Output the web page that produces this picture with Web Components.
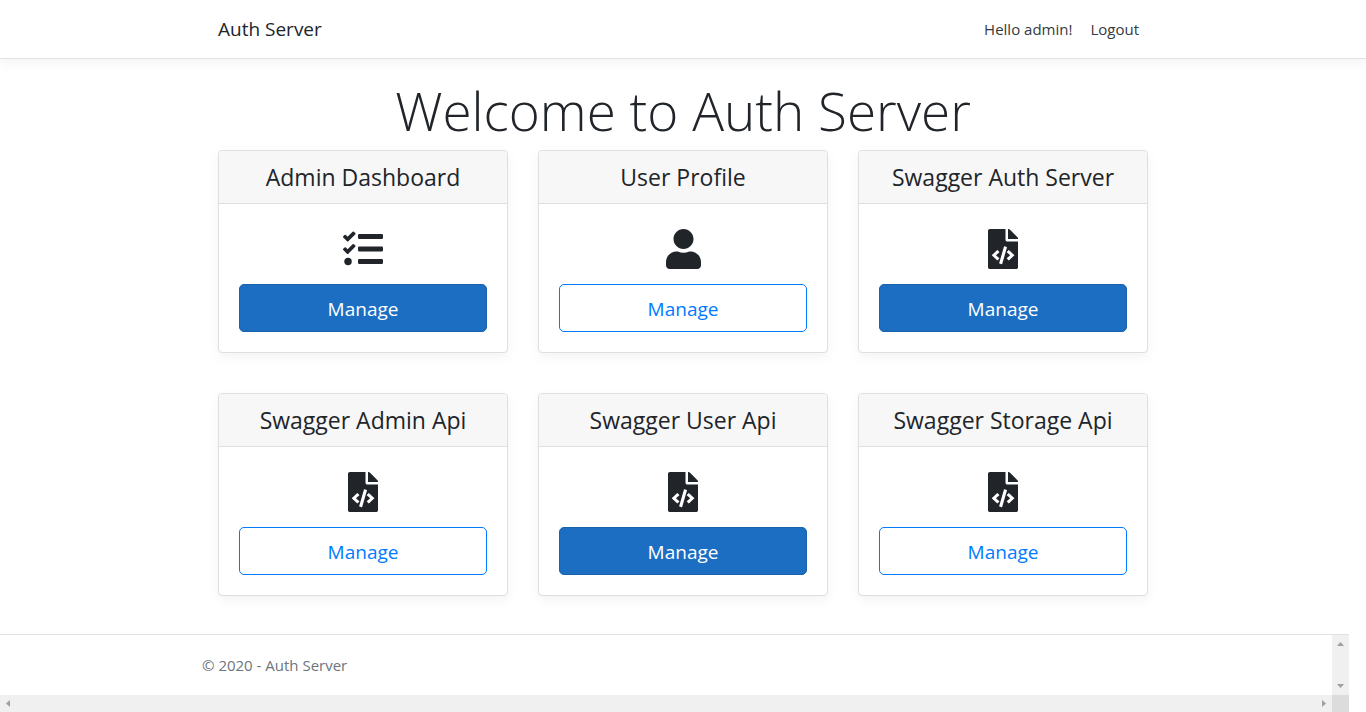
<!DOCTYPE html>
<html lang="en">
<head>
<meta charset="utf-8">
<meta name="viewport" content="width=device-width, initial-scale=1">
<title>Auth Server</title>
<style>
  body { margin: 0; background: #fff; color: #212529; font: 15px/24px "Open Sans", "Noto Sans", sans-serif; }
</style>
</head>
<body>
<auth-page></auth-page>

<template id="page-template">
  <style>
    :host { display: flex; flex-direction: column; min-height: 100vh; }
    main { box-sizing: border-box; width: 100%; max-width: 960px; margin: 0 auto; padding: 18px 15px 38px; flex: 1; }
    h1 { margin: 0 0 6px; font-size: 53px; font-weight: 300; line-height: 67px; text-align: center; }
    .deck { display: grid; grid-template-columns: repeat(auto-fit, minmax(240px, 1fr)); gap: 40px 30px; }
  </style>
  <auth-header>
    <span slot="user">Hello admin!</span>
  </auth-header>
  <main>
    <h1>Welcome to Auth Server</h1>
    <div class="deck">
      <service-card icon="tasks" primary>Admin Dashboard</service-card>
      <service-card icon="user">User Profile</service-card>
      <service-card icon="code" primary>Swagger Auth Server</service-card>
      <service-card icon="code">Swagger Admin Api</service-card>
      <service-card icon="code" primary>Swagger User Api</service-card>
      <service-card icon="code">Swagger Storage Api</service-card>
    </div>
  </main>
  <footer-frame>© 2020 - Auth Server</footer-frame>
</template>

<template id="header-template">
  <style>
    :host { display: block; border-bottom: 1px solid #dee2e6; background: #fff; box-shadow: 0 4px 12px rgba(0, 0, 0, .05); }
    nav { box-sizing: border-box; display: flex; align-items: center; max-width: 960px; height: 58px; margin: 0 auto; padding: 0 24px 0 15px; }
    a { color: #212529; text-decoration: none; }
    .brand { margin-right: auto; font-size: 19px; line-height: 30px; }
    .user { color: #343a40; margin-right: 18px; }
    button { padding: 0; border: 0; background: none; color: #343a40; font: inherit; cursor: pointer; }
  </style>
  <nav>
    <a class="brand" href="#">Auth Server</a>
    <span class="user"><slot name="user"></slot></span>
    <button type="button">Logout</button>
  </nav>
</template>

<template id="card-template">
  <style>
    :host { display: block; border: 1px solid #dfdfdf; border-radius: 4px; background: #fff; box-shadow: 0 4px 12px rgba(0, 0, 0, .05); text-align: center; }
    h2 { margin: 0; padding: 12px 8px; border-bottom: 1px solid #dfdfdf; border-radius: 3px 3px 0 0; background: #f7f7f7; font-size: 23px; font-weight: 400; line-height: 28px; white-space: nowrap; }
    .body { padding: 25px 20px 20px; }
    svg { display: block; height: 40px; margin: 0 auto 15px; fill: #212529; }
    button { display: block; box-sizing: border-box; width: 100%; height: 48px; padding: 2px 0 0; border: 1px solid #007bff; border-radius: 5px; background: #fff; color: #007bff; font: inherit; font-size: 19px; line-height: 30px; cursor: pointer; }
    :host([primary]) button { border-color: #1861ac; background: #1b6ec2; color: #fff; font-weight: 500; }
  </style>
  <h2><slot></slot></h2>
  <div class="body">
    <svg aria-hidden="true"><path/></svg>
    <button type="button">Manage</button>
  </div>
</template>

<template id="footer-template">
  <style>
    :host { display: grid; grid-template-columns: 1fr 17px; grid-template-rows: 60px 17px; margin-right: 17px; border-top: 1px solid #dee2e6; }
    footer { color: #6c757d; }
    .inner { box-sizing: border-box; max-width: 960px; margin: 0 auto; padding: 0 16px; line-height: 60px; }
    .bar { display: flex; justify-content: space-between; align-items: center; background: #f0f0f0; }
    .down { flex-direction: column; padding: 7px 0; }
    .across { padding: 0 6px; }
    .corner { background: #dcdcdc; }
    svg { display: block; fill: #a0a0a0; }
  </style>
  <footer><div class="inner"><slot></slot></div></footer>
  <div class="bar down" aria-hidden="true">
    <svg width="7" height="4"><path d="M0 4 3.5 0 7 4z"/></svg>
    <svg width="7" height="4"><path d="M0 0 3.5 4 7 0z"/></svg>
  </div>
  <div class="bar across" aria-hidden="true">
    <svg width="4" height="7"><path d="M4 0 0 3.5 4 7z"/></svg>
    <svg width="4" height="7"><path d="M0 0 4 3.5 0 7z"/></svg>
  </div>
  <div class="corner"></div>
</template>

<script>
  const ICONS = {
    tasks: [512, 'M139.61 35.5a12 12 0 0 0-17 0L58.93 98.81l-22.7-22.12a12 12 0 0 0-17 0L3.53 92.41a12 12 0 0 0 0 17l47.59 47.4a12.78 12.78 0 0 0 17.61 0l15.59-15.62L156.52 69a12.09 12.09 0 0 0 .09-17zm0 159.19a12 12 0 0 0-17 0l-63.68 63.72-22.7-22.1a12 12 0 0 0-17 0L3.53 252a12 12 0 0 0 0 17L51 316.5a12.77 12.77 0 0 0 17.6 0l15.7-15.69 72.2-72.22a12 12 0 0 0 .09-16.9zM64 368c-26.49 0-48.59 21.5-48.59 48S37.53 464 64 464a48 48 0 0 0 0-96zm432 16H208a16 16 0 0 0-16 16v32a16 16 0 0 0 16 16h288a16 16 0 0 0 16-16v-32a16 16 0 0 0-16-16zm0-320H208a16 16 0 0 0-16 16v32a16 16 0 0 0 16 16h288a16 16 0 0 0 16-16V80a16 16 0 0 0-16-16zm0 160H208a16 16 0 0 0-16 16v32a16 16 0 0 0 16 16h288a16 16 0 0 0 16-16v-32a16 16 0 0 0-16-16z'],
    user: [448, 'M224 256c70.7 0 128-57.3 128-128S294.7 0 224 0 96 57.3 96 128s57.3 128 128 128zm89.6 32h-16.7c-22.2 10.2-46.9 16-72.9 16s-50.6-5.8-72.9-16h-16.7C60.2 288 0 348.2 0 422.4V464c0 26.5 21.5 48 48 48h352c26.5 0 48-21.5 48-48v-41.6c0-74.2-60.2-134.4-134.4-134.4z'],
    code: [384, 'M384 121.941V128H256V0h6.059c6.365 0 12.47 2.529 16.971 7.029l97.941 97.941A24.005 24.005 0 0 1 384 121.941zM248 160c-13.2 0-24-10.8-24-24V0H24C10.745 0 0 10.745 0 24v464c0 13.255 10.745 24 24 24h336c13.255 0 24-10.745 24-24V160H248zM123.206 400.505a5.4 5.4 0 0 1-7.633.246l-64.866-60.812a5.4 5.4 0 0 1 0-7.879l64.866-60.812a5.4 5.4 0 0 1 7.633.246l19.579 20.885a5.4 5.4 0 0 1-.372 7.747L101.65 336l40.763 35.874a5.4 5.4 0 0 1 .372 7.747l-19.579 20.884zm51.295 50.479l-27.453-7.97a5.402 5.402 0 0 1-3.681-6.692l61.44-211.626a5.402 5.402 0 0 1 6.692-3.681l27.452 7.97a5.4 5.4 0 0 1 3.68 6.692l-61.44 211.626a5.397 5.397 0 0 1-6.69 3.681zm160.792-111.045l-64.866 60.812a5.4 5.4 0 0 1-7.633-.246l-19.58-20.885a5.4 5.4 0 0 1 .372-7.747L284.35 336l-40.763-35.874a5.4 5.4 0 0 1-.372-7.747l19.58-20.885a5.4 5.4 0 0 1 7.633-.246l64.866 60.812a5.4 5.4 0 0 1-.001 7.879z']
  };

  class TemplateElement extends HTMLElement {
    constructor() {
      super();
      const template = document.getElementById(this.constructor.template);
      this.attachShadow({ mode: 'open' }).append(template.content.cloneNode(true));
    }
  }

  class AuthHeader extends TemplateElement { static template = 'header-template'; }
  class FooterFrame extends TemplateElement { static template = 'footer-template'; }
  class AuthPage extends TemplateElement { static template = 'page-template'; }

  class ServiceCard extends TemplateElement {
    static template = 'card-template';
    connectedCallback() {
      const [width, path] = ICONS[this.getAttribute('icon')];
      const svg = this.shadowRoot.querySelector('svg');
      svg.setAttribute('viewBox', `0 0 ${width} 512`);
      svg.setAttribute('width', width * 40 / 512);
      svg.querySelector('path').setAttribute('d', path);
    }
  }

  customElements.define('auth-header', AuthHeader);
  customElements.define('service-card', ServiceCard);
  customElements.define('footer-frame', FooterFrame);
  customElements.define('auth-page', AuthPage);
</script>
</body>
</html>
